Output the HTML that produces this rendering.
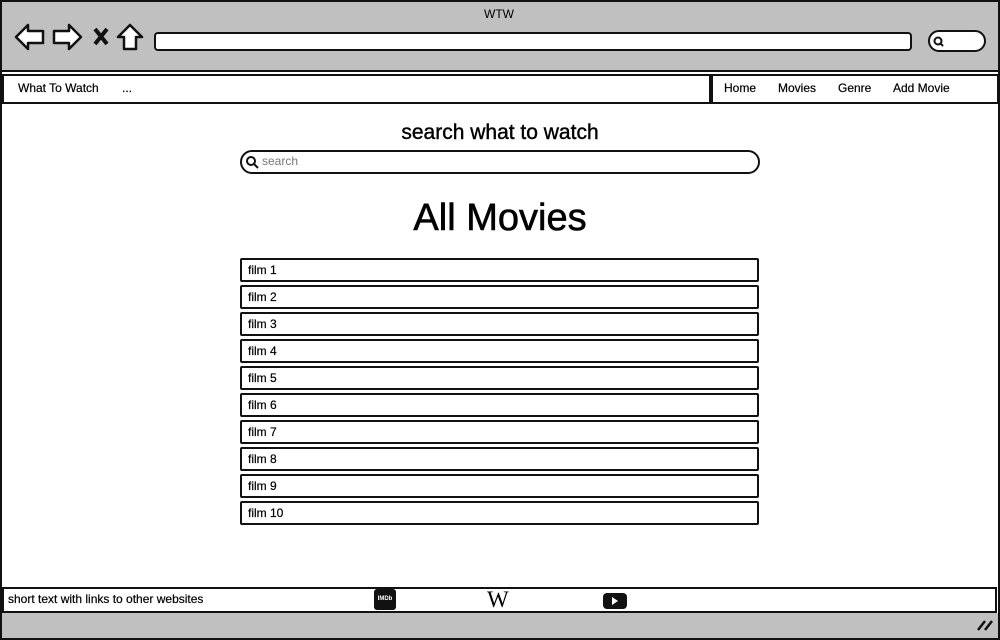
<!DOCTYPE html><html><head><style>
*{box-sizing:border-box;margin:0;padding:0}
body{width:1000px;height:640px;background:#fff;font-family:"Liberation Sans",sans-serif;position:relative;overflow:hidden;color:#000}
.a{position:absolute}
.b{border:2px solid #111}
.film{position:absolute;left:240px;width:519px;height:24px;border:2px solid #111;border-radius:2px;font-size:12px;padding:3px 0 0 6px;background:#fff;-webkit-text-stroke:0.2px #000}
.n{font-size:12px;-webkit-text-stroke:0.2px #000}
</style></head><body>
<div class="a b" style="left:0;top:0;width:1000px;height:640px;background:#fff"></div>
<div class="a" style="left:2px;top:2px;width:996px;height:70px;background:#c0c0c0;border-bottom:2px solid #111"></div>
<div class="a" style="left:484px;top:7px;font-size:12px">WTW</div>
<svg class="a" style="left:14px;top:22px" width="130" height="32" viewBox="0 0 130 32">
<path d="M2 15 L14 3 L14 9 L29 9 L29 21 L14 21 L14 27 Z" fill="#fff" stroke="#111" stroke-width="2.5" stroke-linejoin="round"/>
<path d="M67 15 L55 3 L55 9 L40 9 L40 21 L55 21 L55 27 Z" fill="#fff" stroke="#111" stroke-width="2.5" stroke-linejoin="round"/>
<path d="M81 7 L93 22 M93 7 L81 22" stroke="#111" stroke-width="4"/>
<path d="M104 15 L116 3 L128 15 L122 15 L122 27 L110 27 L110 15 Z" fill="#fff" stroke="#111" stroke-width="2.5" stroke-linejoin="round"/>
</svg>
<div class="a b" style="left:154px;top:32px;width:758px;height:19px;background:#fff;border-radius:4px"></div>
<div class="a b" style="left:928px;top:30px;width:58px;height:22px;background:#fff;border-radius:11px"></div>
<svg class="a" style="left:932px;top:35px" width="14" height="14"><circle cx="6" cy="6" r="3.5" fill="none" stroke="#111" stroke-width="2"/><path d="M8.5 8.5 L11 11" stroke="#111" stroke-width="2"/></svg>
<div class="a b" style="left:2px;top:74px;width:709px;height:30px;background:#fff"></div>
<div class="a b" style="left:711px;top:74px;width:288px;height:30px;background:#fff"></div>
<div class="a n" style="left:18px;top:81px">What To Watch</div>
<div class="a n" style="left:122px;top:81px">...</div>
<div class="a n" style="left:724px;top:81px">Home</div>
<div class="a n" style="left:778px;top:81px">Movies</div>
<div class="a n" style="left:838px;top:81px">Genre</div>
<div class="a n" style="left:893px;top:81px">Add Movie</div>
<div class="a" style="left:0;width:1000px;top:121px;text-align:center;font-size:21px;-webkit-text-stroke:0.4px #000">search what to watch</div>
<div class="a b" style="left:240px;top:150px;width:520px;height:24px;border-radius:12px"></div>
<svg class="a" style="left:245px;top:155px" width="14" height="14"><circle cx="6" cy="6" r="4" fill="none" stroke="#111" stroke-width="2"/><path d="M9 9 L13 13" stroke="#111" stroke-width="2"/></svg>
<div class="a" style="left:262px;top:154px;font-size:12px;color:#777">search</div>
<div class="a" style="left:0;width:1000px;top:197px;text-align:center;font-size:38px;-webkit-text-stroke:0.6px #000">All Movies</div>
<div class="film" style="top:258px">film 1</div>
<div class="film" style="top:285px">film 2</div>
<div class="film" style="top:312px">film 3</div>
<div class="film" style="top:339px">film 4</div>
<div class="film" style="top:366px">film 5</div>
<div class="film" style="top:393px">film 6</div>
<div class="film" style="top:420px">film 7</div>
<div class="film" style="top:447px">film 8</div>
<div class="film" style="top:474px">film 9</div>
<div class="film" style="top:501px">film 10</div>
<div class="a b" style="left:2px;top:587px;width:995px;height:26px;background:#fff"></div>
<div class="a n" style="left:8px;top:592px">short text with links to other websites</div>
<div class="a" style="left:374px;top:589px;width:22px;height:21px;background:#111;border-radius:3px;color:#fff;font-size:6px;font-weight:bold;text-align:center;line-height:21px">IMDb</div>
<div class="a" style="left:487px;top:587px;font-family:'Liberation Serif',serif;font-size:23px">W</div>
<div class="a" style="left:603px;top:593px;width:24px;height:16px;background:#111;border-radius:4px"></div>
<svg class="a" style="left:611px;top:597px" width="8" height="8"><path d="M1 0 L7 4 L1 8 Z" fill="#fff"/></svg>
<div class="a" style="left:2px;top:613px;width:996px;height:25px;background:#c0c0c0"></div>
<svg class="a" style="left:976px;top:618px" width="18" height="14"><path d="M2 12 L9 3 M9 12 L16 3" stroke="#111" stroke-width="2.5"/></svg>
</body></html>
